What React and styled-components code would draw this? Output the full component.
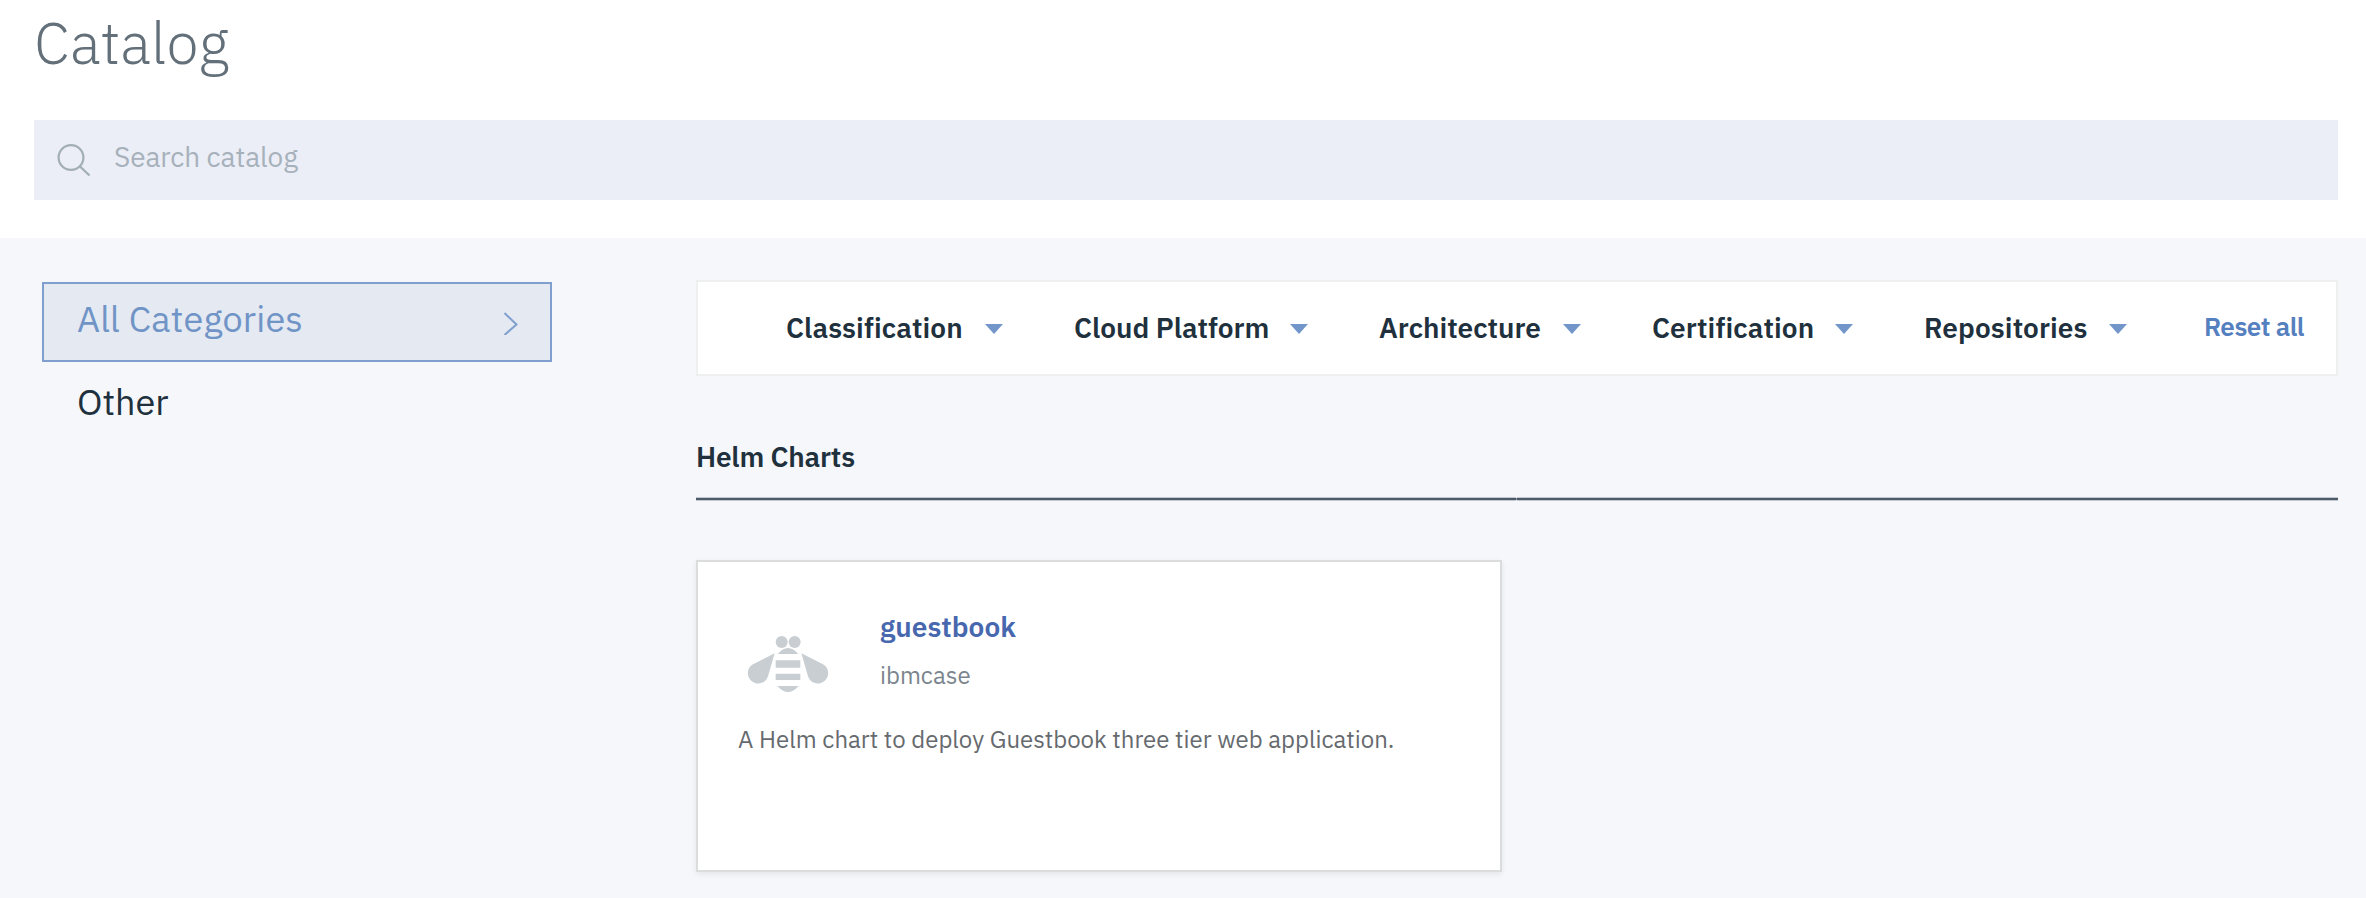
import React from 'react';
import styled, { createGlobalStyle } from 'styled-components';

const GlobalStyle = createGlobalStyle`
  *, *::before, *::after { box-sizing: border-box; }
  body {
    margin: 0;
    background: #f5f7fb;
    font-family: "IBM Plex Sans", "Open Sans", "Noto Sans", sans-serif;
    color: #20303d;
  }
  h1, h2, h3, p { margin: 0; }
`;

const Page = styled.div`
  width: 100%;
  min-height: 898px;
  background: #f5f7fb;
`;

const Header = styled.header`
  height: 238px;
  padding: 13px 28px 0 34px;
  background: #fff;
`;

const Title = styled.h1`
  font-size: 58px;
  line-height: 60px;
  font-weight: 300;
  letter-spacing: 0.1px;
  color: #63707a;
`;

const SearchBar = styled.div`
  display: flex;
  align-items: center;
  height: 80px;
  margin-top: 47px;
  padding-left: 23px;
  background: #ebeef6;
`;

const SearchText = styled.span`
  margin-left: 23px;
  padding-bottom: 6px;
  font-size: 28px;
  line-height: 40px;
  letter-spacing: -0.1px;
  color: #a7b1bb;
`;

const Body = styled.div`
  display: flex;
  align-items: flex-start;
  padding: 42px 28px 0 42px;
`;

const Sidebar = styled.nav`
  width: 510px;
  margin-top: 2px;
  margin-right: 144px;
`;

const Category = styled.div`
  display: flex;
  align-items: center;
  justify-content: space-between;
  height: 80px;
  padding: 0 31px 0 33px;
  border: 2px solid ${(p) => (p.$active ? '#7f9fce' : 'transparent')};
  background: ${(p) => (p.$active ? '#e4e9f2' : 'transparent')};
  color: ${(p) => (p.$active ? '#7094c6' : '#20303d')};
`;

const CategoryName = styled.span`
  padding-bottom: ${(p) => (p.$active ? 7 : 0)}px;
  font-size: 36px;
  line-height: 50px;
  letter-spacing: ${(p) => (p.$active ? 0.2 : 0)}px;
`;

const Chevron = styled.svg`
  width: 16px;
  height: 26px;
  fill: none;
  stroke: #7f9fce;
  stroke-width: 2;
`;

const Main = styled.main`
  flex: 1;
  min-width: 0;
`;

const FilterBar = styled.div`
  display: flex;
  align-items: center;
  height: 96px;
  padding-left: 88px;
  border: 2px solid #eeefef;
  background: #fff;
`;

const Filter = styled.div`
  display: flex;
  align-items: center;
  margin-right: 71px;
`;

const FilterLabel = styled.span`
  width: ${(p) => p.$width}px;
  white-space: nowrap;
  font-size: 28px;
  line-height: 40px;
  font-weight: 600;
  letter-spacing: ${(p) => p.$tracking}px;
`;

const Caret = styled.span`
  margin-top: 1px;
  border-left: 9.5px solid transparent;
  border-right: 9.5px solid transparent;
  border-top: 10px solid #7396ca;
`;

const ResetLink = styled.a`
  margin-left: 6px;
  padding-bottom: 4px;
  white-space: nowrap;
  font-size: 26px;
  line-height: 36px;
  font-weight: 600;
  letter-spacing: -0.5px;
  color: #5580bf;
`;

const SectionTitle = styled.h2`
  margin-top: 61px;
  font-size: 28px;
  line-height: 40px;
  font-weight: 600;
  letter-spacing: -0.2px;
`;

const Rule = styled.div`
  display: flex;
  gap: 1px;
  margin: 21px 0 60px;
  background: #8b959d;
`;

const RulePart = styled.div`
  height: 2px;
  width: ${(p) => p.$width};
  background: #4e5b66;
  box-shadow: 0 1px 0 #c3c9d0, 0 -1px 0 #c3c9d0;
`;

const Card = styled.article`
  width: 806px;
  height: 312px;
  padding: 45px 40px 0;
  border: 2px solid #dadddc;
  background: #fff;
  box-shadow: 0 2px 6px rgba(0, 0, 0, 0.08);
`;

const CardHead = styled.div`
  display: flex;
  height: 90px;
`;

const BeeIcon = styled.svg`
  flex: none;
  width: 84px;
  height: 60px;
  margin: 28px 50px 0 8px;
  fill: #c8ced2;
`;

const CardTitle = styled.h3`
  font-size: 28px;
  line-height: 40px;
  font-weight: 600;
  letter-spacing: 0.05px;
  color: #4767ae;
`;

const CardText = styled.p`
  margin-top: ${(p) => p.$top}px;
  white-space: nowrap;
  font-size: 24px;
  line-height: 30px;
  color: ${(p) => p.$color};
`;

const filters = [
  { name: 'Classification', width: 199, tracking: 0.1 },
  { name: 'Cloud Platform', width: 216, tracking: 0 },
  { name: 'Architecture', width: 184, tracking: 0 },
  { name: 'Certification', width: 183, tracking: 0.1 },
  { name: 'Repositories', width: 185, tracking: 0.1 },
];

export default function App() {
  return (
    <>
      <GlobalStyle />
      <Page>
        <Header>
          <Title>Catalog</Title>
          <SearchBar>
            <svg width="34" height="34" viewBox="0 0 34 34" fill="none" stroke="#a2adb5" strokeWidth="2.2">
              <circle cx="14" cy="14.5" r="12.4" />
              <path d="M22.8 23.2L32.5 32.5" />
            </svg>
            <SearchText>Search catalog</SearchText>
          </SearchBar>
        </Header>
        <Body>
          <Sidebar>
            <Category $active>
              <CategoryName $active>All Categories</CategoryName>
              <Chevron viewBox="0 0 16 26">
                <path d="M1.5 4L13.5 15.5L1.5 26" />
              </Chevron>
            </Category>
            <Category>
              <CategoryName>Other</CategoryName>
            </Category>
          </Sidebar>
          <Main>
            <FilterBar>
              {filters.map((f) => (
                <Filter key={f.name}>
                  <FilterLabel $width={f.width} $tracking={f.tracking}>{f.name}</FilterLabel>
                  <Caret />
                </Filter>
              ))}
              <ResetLink>Reset all</ResetLink>
            </FilterBar>
            <SectionTitle>Helm Charts</SectionTitle>
            <Rule>
              <RulePart $width="820px" />
              <RulePart $width="821px" />
            </Rule>
            <Card>
              <CardHead>
                <BeeIcon viewBox="198 285 252 180">
                  <circle cx="305" cy="306" r="18" />
                  <circle cx="344" cy="306" r="18" />
                  <path d="M284 340L222 371A31 31 0 1 0 264 409Z" />
                  <path d="M364 340L426 371A31 31 0 1 1 384 409Z" />
                  <path d="M293 342Q324 306 355 342Z" />
                  <path d="M287 361H361V383H287ZM287 401H361V420H287Z" />
                  <path d="M292 438H356Q324 474 292 438Z" />
                </BeeIcon>
                <div>
                  <CardTitle>guestbook</CardTitle>
                  <CardText $top={13} $color="#7b858d">ibmcase</CardText>
                </div>
              </CardHead>
              <CardText $top={27} $color="#666a6e">
                A Helm chart to deploy Guestbook three tier web application.
              </CardText>
            </Card>
          </Main>
        </Body>
      </Page>
    </>
  );
}
